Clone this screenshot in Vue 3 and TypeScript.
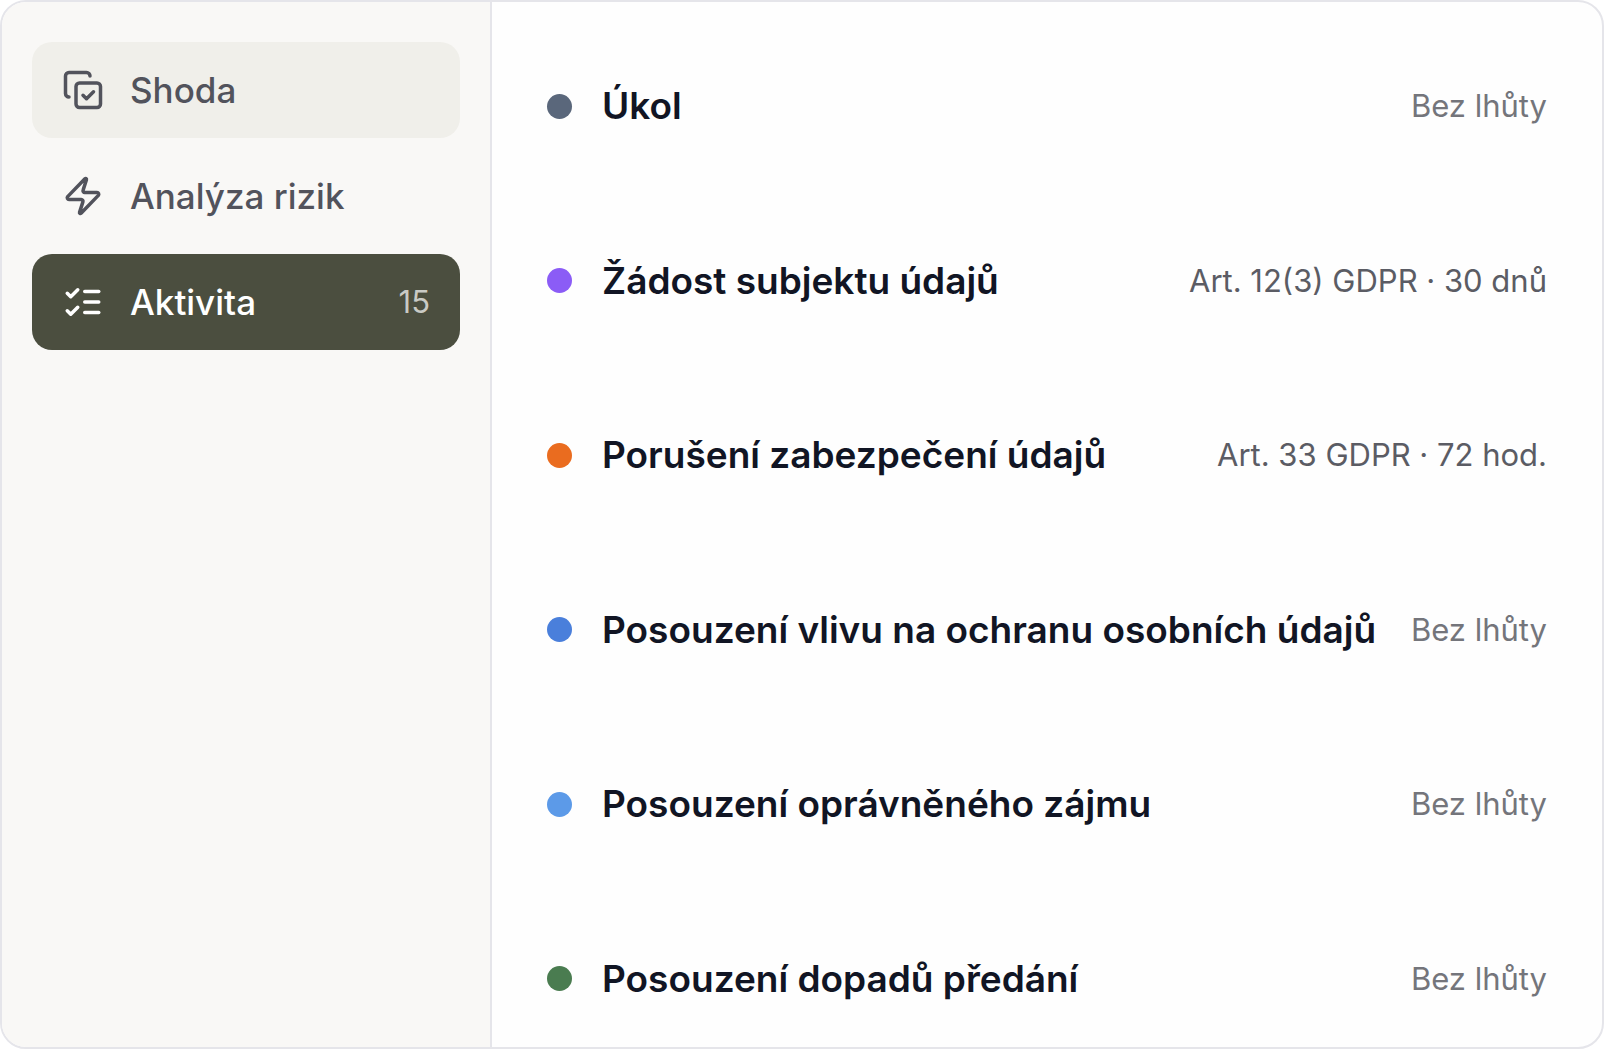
<script setup lang="ts">
import { ref } from 'vue'

interface NavItem {
  id: string
  label: string
  icon: string[]
  count?: number
}

interface TaskType {
  label: string
  color: string
  deadline?: string
}

const navItems: NavItem[] = [
  {
    id: 'compliance',
    label: 'Shoda',
    icon: [
      'm12 15 2 2 4-4',
      'M10 8h10a2 2 0 0 1 2 2v10a2 2 0 0 1-2 2H10a2 2 0 0 1-2-2V10a2 2 0 0 1 2-2z',
      'M4 16c-1.1 0-2-.9-2-2V4c0-1.1.9-2 2-2h10c1.1 0 2 .9 2 2',
    ],
  },
  {
    id: 'risk',
    label: 'Analýza rizik',
    icon: [
      'M4 14a1 1 0 0 1-.78-1.63l9.9-10.2a.5.5 0 0 1 .86.46l-1.92 6.02A1 1 0 0 0 13 10h7a1 1 0 0 1 .78 1.63l-9.9 10.2a.5.5 0 0 1-.86-.46l1.92-6.02A1 1 0 0 0 11 14z',
    ],
  },
  {
    id: 'activity',
    label: 'Aktivita',
    icon: ['m3 17 2 2 4-4', 'm3 7 2 2 4-4', 'M13 6h8', 'M13 12h8', 'M13 18h8'],
    count: 15,
  },
]

const taskTypes: TaskType[] = [
  { label: 'Úkol', color: '#5a677b' },
  { label: 'Žádost subjektu údajů', color: '#8b5cf6', deadline: 'Art. 12(3) GDPR · 30 dnů' },
  { label: 'Porušení zabezpečení údajů', color: '#ea6c1f', deadline: 'Art. 33 GDPR · 72 hod.' },
  { label: 'Posouzení vlivu na ochranu osobních údajů', color: '#4a7fdb' },
  { label: 'Posouzení oprávněného zájmu', color: '#5c9ae8' },
  { label: 'Posouzení dopadů předání', color: '#4a7c50' },
]

const active = ref('activity')
const highlighted = ref('compliance')
</script>

<template>
  <div class="panel">
    <nav class="sidebar">
      <button
        v-for="item in navItems"
        :key="item.id"
        type="button"
        class="nav-item"
        :class="{ active: item.id === active, highlighted: item.id === highlighted }"
        @click="active = item.id"
      >
        <svg class="nav-icon" viewBox="0 0 24 24" aria-hidden="true">
          <path v-for="d in item.icon" :key="d" :d="d" />
        </svg>
        <span class="nav-label">{{ item.label }}</span>
        <span v-if="item.count" class="nav-count">{{ item.count }}</span>
      </button>
    </nav>
    <main class="content">
      <ul class="list">
        <li v-for="task in taskTypes" :key="task.label" class="row">
          <span class="dot" :style="{ background: task.color }"></span>
          <span class="title">{{ task.label }}</span>
          <span class="deadline" :class="{ none: !task.deadline }">{{ task.deadline ?? 'Bez lhůty' }}</span>
        </li>
      </ul>
    </main>
  </div>
</template>

<style>
body {
  margin: 0;
  background: #fff;
}
</style>

<style scoped>
.panel {
  display: flex;
  box-sizing: border-box;
  min-height: 100vh;
  border: 2px solid #e5e5ea;
  border-radius: 26px;
  overflow: hidden;
  background: #fefefe;
  font-family: Inter, 'Liberation Sans', sans-serif;
}

.sidebar {
  display: flex;
  flex: none;
  flex-direction: column;
  gap: 10px;
  box-sizing: border-box;
  width: 490px;
  padding: 40px 30px;
  border-right: 2px solid #e5e5ea;
  background: #f9f8f6;
}

.nav-item {
  display: flex;
  align-items: center;
  gap: 26px;
  height: 96px;
  padding: 0 30px;
  border: 0;
  border-radius: 20px;
  background: transparent;
  color: #52535c;
  font: 500 35px/48px Inter, 'Liberation Sans', sans-serif;
  text-align: left;
  cursor: pointer;
}

.nav-item.highlighted {
  background: #f0efea;
}

.nav-item.active {
  background: #4b4e3f;
  color: #fff;
}

.nav-icon {
  flex: none;
  width: 42px;
  height: 42px;
  fill: none;
  stroke: currentColor;
  stroke-width: 2;
  stroke-linecap: round;
  stroke-linejoin: round;
}

.nav-label {
  flex: 1;
}

.nav-count {
  color: #c9cac5;
  font-size: 31px;
  font-weight: 400;
}

.content {
  display: flex;
  flex: 1;
  min-width: 0;
}

.list {
  display: flex;
  flex: 1;
  flex-direction: column;
  justify-content: space-between;
  margin: 0;
  padding: 80px 55px 44px;
  list-style: none;
}

.row {
  display: flex;
  align-items: center;
  line-height: 48px;
}

.dot {
  flex: none;
  width: 25px;
  height: 25px;
  margin-right: 30px;
  border-radius: 50%;
}

.title {
  flex: 1;
  color: #111524;
  font-size: 37px;
  font-weight: 600;
  white-space: nowrap;
}

.deadline {
  color: #5b5c64;
  font-size: 31px;
  white-space: nowrap;
}

.deadline.none {
  color: #74757b;
}
</style>
